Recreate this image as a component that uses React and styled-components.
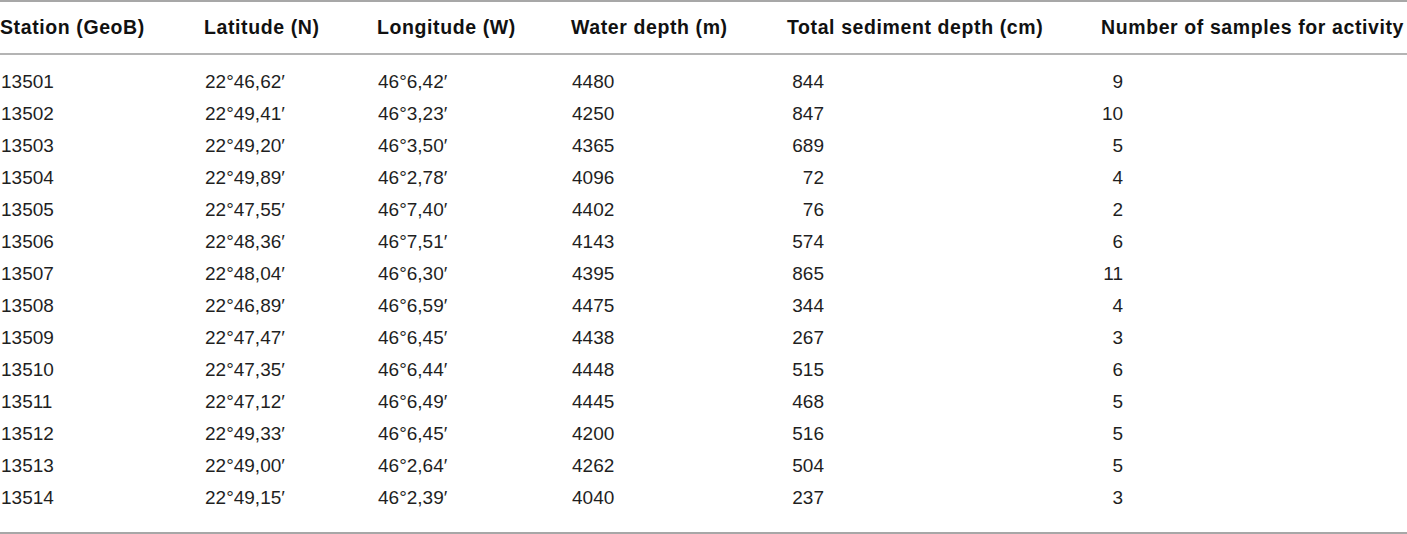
import React from 'react'
import styled, { createGlobalStyle } from 'styled-components'

const rows = [
  ['13501', '22°46,62′', '46°6,42′', '4480', '844', '9'],
  ['13502', '22°49,41′', '46°3,23′', '4250', '847', '10'],
  ['13503', '22°49,20′', '46°3,50′', '4365', '689', '5'],
  ['13504', '22°49,89′', '46°2,78′', '4096', '72', '4'],
  ['13505', '22°47,55′', '46°7,40′', '4402', '76', '2'],
  ['13506', '22°48,36′', '46°7,51′', '4143', '574', '6'],
  ['13507', '22°48,04′', '46°6,30′', '4395', '865', '11'],
  ['13508', '22°46,89′', '46°6,59′', '4475', '344', '4'],
  ['13509', '22°47,47′', '46°6,45′', '4438', '267', '3'],
  ['13510', '22°47,35′', '46°6,44′', '4448', '515', '6'],
  ['13511', '22°47,12′', '46°6,49′', '4445', '468', '5'],
  ['13512', '22°49,33′', '46°6,45′', '4200', '516', '5'],
  ['13513', '22°49,00′', '46°2,64′', '4262', '504', '5'],
  ['13514', '22°49,15′', '46°2,39′', '4040', '237', '3'],
]

const headers = [
  'Station (GeoB)',
  'Latitude (N)',
  'Longitude (W)',
  'Water depth (m)',
  'Total sediment depth (cm)',
  'Number of samples for activity',
]

function App() {
  return (
    <>
      <GlobalStyle />
      <Table>
        <HeadRow>
          {headers.map((h) => (
            <HeadCell key={h}>{h}</HeadCell>
          ))}
        </HeadRow>
        <Body>
          {rows.map((r) => (
            <Row key={r[0]}>
              <Cell>{r[0]}</Cell>
              <Cell>{r[1]}</Cell>
              <Cell>{r[2]}</Cell>
              <Cell>{r[3]}</Cell>
              <Cell><Num $w={36}>{r[4]}</Num></Cell>
              <Cell><Num $w={21}>{r[5]}</Num></Cell>
            </Row>
          ))}
        </Body>
      </Table>
    </>
  )
}

export default App

const GlobalStyle = createGlobalStyle`
body {
  margin: 0;
  background: #fff;
  font-family: "Liberation Sans", Arial, sans-serif;
  color: #1f1f1f;
}
`

const cols = '204px 173px 194px 216px 314px 1fr'

const Table = styled.div`
width: 1407px;
height: 534px;
box-sizing: border-box;
border-top: 2px solid #a7a7a7;
display: flex;
flex-direction: column;
overflow: hidden;
`

const HeadRow = styled.div`
display: grid;
grid-template-columns: ${cols};
height: 51px;
align-items: center;
border-bottom: 2px solid #b4b4b4;
`

const HeadCell = styled.div`
font-size: 19.5px;
font-weight: bold;
letter-spacing: 0.6px;
white-space: nowrap;
color: #111;
`

const Body = styled.div`
flex: 1;
padding-top: 11px;
border-bottom: 2px solid #a7a7a7;
`

const Row = styled.div`
display: grid;
grid-template-columns: ${cols};
height: 32px;
align-items: center;
`

const Cell = styled.div`
font-size: 19px;
white-space: nowrap;
padding-left: 1px;
`

const Num = styled.span`
display: inline-block;
width: ${(p) => p.$w}px;
text-align: right;
`
